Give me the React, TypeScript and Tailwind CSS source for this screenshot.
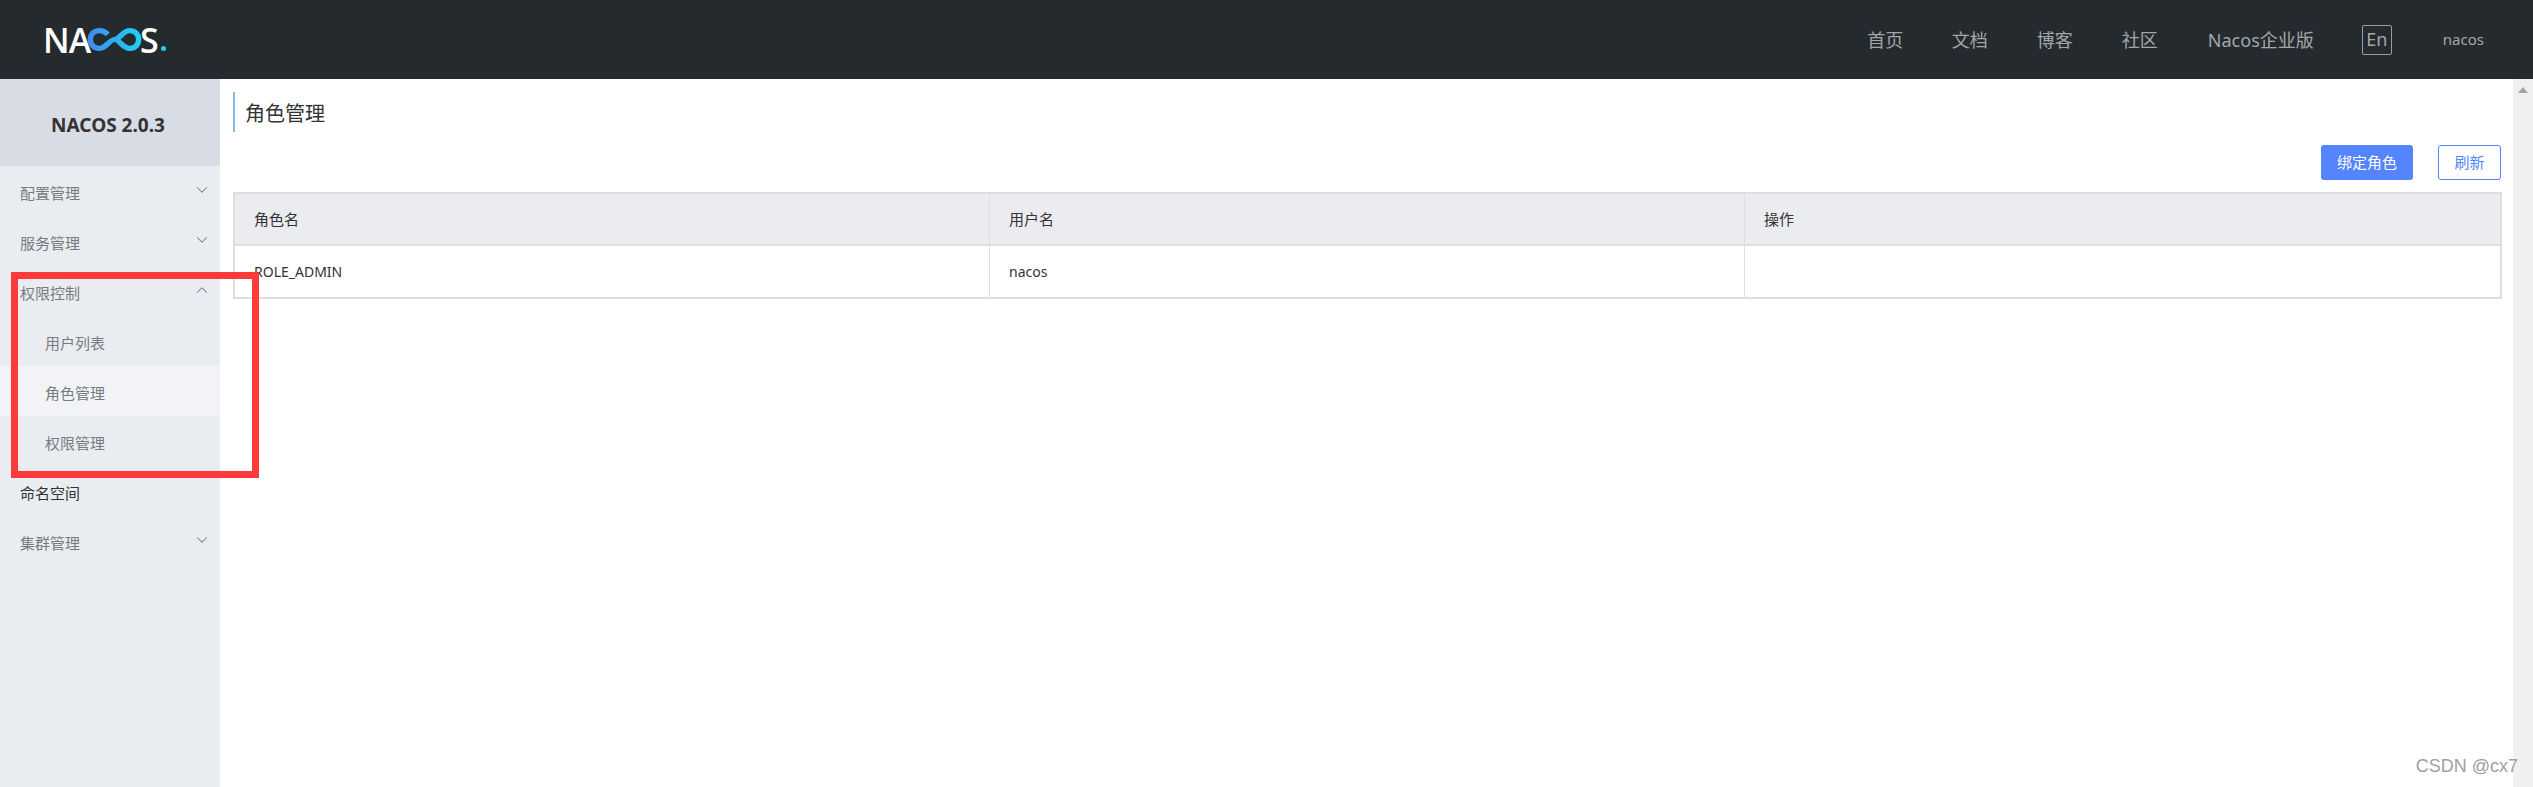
import { ChevronDown, ChevronUp } from 'lucide-react'

const navLinks = [
  { label: '首页', width: 'w-[84.5px]' },
  { label: '文档', width: 'w-[85px]' },
  { label: '博客', width: 'w-[85px]' },
  { label: '社区', width: 'w-[86px]' },
  { label: 'Nacos企业版', width: 'w-[154px]' },
]

const menu = [
  { label: '配置管理', arrow: 'down' },
  { label: '服务管理', arrow: 'down' },
  { label: '权限控制', arrow: 'up' },
  { label: '用户列表', sub: true },
  { label: '角色管理', sub: true, active: true },
  { label: '权限管理', sub: true },
  { label: '命名空间', dark: true },
  { label: '集群管理', arrow: 'down' },
]

function Logo() {
  return (
    <div className="flex items-center h-[24px] text-white font-['Open_Sans',sans-serif] font-semibold text-[34px] leading-none">
      <span className="tracking-[-1px]">NA</span>
      <svg width="55" height="25" viewBox="0 0 50 24" fill="none" preserveAspectRatio="none" className="-ml-[3px]">
        <defs>
          <linearGradient id="loop" x1="0" y1="0" x2="1" y2="0">
            <stop offset="0" stopColor="#3f8cf5" />
            <stop offset="1" stopColor="#1fd0f0" />
          </linearGradient>
        </defs>
        <path
          d="M19 7 C16 4 13 3.500 11 3.500 C6 3.500 3 7.500 3 12 C3 16.500 6 20.500 11 20.500 C18 20.500 20 12 25 12 C30 12 32 3.500 39 3.500 C44 3.500 47 7.500 47 12 C47 16.500 44 20.500 39 20.500 C32 20.500 30 12 25 12"
          stroke="url(#loop)"
          strokeWidth="5"
          strokeLinecap="butt"
        />
      </svg>
      <span className="-ml-[2px]">S</span>
      <span className="w-[5px] h-[5px] bg-[#1fd0e8] rounded-full self-end mb-[1px] ml-[2px]" />
    </div>
  )
}

export default function App() {
  return (
    <div className="relative h-[787px] w-[2533px] overflow-hidden bg-white flex flex-col font-['Noto_Sans','Noto_Sans_CJK_SC',sans-serif]">
      {/* Header */}
      <header className="h-[79px] bg-[#252a2f] flex items-center shrink-0">
        <div className="ml-[43px]">
          <Logo />
        </div>
        <nav className="ml-auto flex items-center mr-[49px]">
          {navLinks.map((link) => (
            <span key={link.label} className={`${link.width} text-[18px] text-[#a3a6a9] leading-none whitespace-nowrap`}>
              {link.label}
            </span>
          ))}
          <span className="w-[30px] h-[30px] border border-[#9a9da0] rounded-[2px] flex items-center justify-center text-[18px] text-[#a3a6a9]">
            En
          </span>
          <span className="ml-[51px] text-[15px] text-[#a3a6a9]">nacos</span>
        </nav>
      </header>

      <div className="flex flex-1 min-h-0">
        {/* Sidebar */}
        <aside className="w-[220px] bg-[#e9ecf1] shrink-0">
          <div className="h-[87px] bg-[#d8dce4] flex items-center justify-center pt-[6px] pr-[4px] text-[19px] font-bold text-[#333333]">
            NACOS 2.0.3
          </div>
          <ul>
            {menu.map((item) => (
              <li
                key={item.label}
                className={`h-[50px] flex items-center justify-between pt-[4px] pr-[9px] text-[15px] ${item.sub ? 'pl-[45px]' : 'pl-[20px]'} ${item.active ? 'bg-[#f2f3f7]' : ''} ${item.dark ? 'text-[#333333]' : 'text-[#777b80]'}`}
              >
                {item.label}
                {item.arrow === 'down' && <ChevronDown size={18} strokeWidth={1.4} className="text-[#777b80] -mt-[6px]" />}
                {item.arrow === 'up' && <ChevronUp size={18} strokeWidth={1.4} className="text-[#777b80] -mt-[6px]" />}
              </li>
            ))}
          </ul>
        </aside>

        {/* Content */}
        <main className="flex-1 min-w-0 pl-[13px] pr-[11px] pt-[13px]">
          <div className="border-l-2 border-[#88b7e0] h-[40px] pl-[10px] flex items-center pt-[3px] text-[20px] text-[#333333]">
            角色管理
          </div>
          <div className="flex justify-end gap-[25px] mt-[13px] pr-[1px]">
            <button className="w-[92px] h-[35px] rounded-[3px] bg-[#5584ff] text-white text-[15px]">绑定角色</button>
            <button className="w-[63px] h-[35px] rounded-[3px] border border-[#5584ff] bg-white text-[#5584ff] text-[15px]">刷新</button>
          </div>
          <div className="mt-[12px] border-2 border-[#dcdee3] border-b-2 text-[14px] text-[#333333]">
            <div className="grid grid-cols-3 h-[52px] bg-[#ebecf0] border-b-2 border-[#dcdee3] text-[15px]">
              <div className="flex items-center pl-[19px] border-r border-[#dcdee3]">角色名</div>
              <div className="flex items-center pl-[19px] border-r border-[#dcdee3]">用户名</div>
              <div className="flex items-center pl-[19px]">操作</div>
            </div>
            <div className="grid grid-cols-3 h-[51px]">
              <div className="flex items-center pl-[19px] border-r border-[#dcdee3]">ROLE_ADMIN</div>
              <div className="flex items-center pl-[19px] border-r border-[#dcdee3]">nacos</div>
              <div />
            </div>
          </div>
        </main>

        {/* Scrollbar */}
        <div className="w-[20px] shrink-0 bg-[#f0f0f0] flex justify-center pt-[8px]">
          <svg width="10" height="6" viewBox="0 0 10 6">
            <path d="M5 0 L10 6 L0 6 Z" fill="#a3a3a3" />
          </svg>
        </div>
      </div>

      {/* Annotation drawn over the sidebar */}
      <div className="absolute left-[11px] top-[272px] w-[248px] h-[206px] border-[7px] border-[#ff3a3a]" />
      <div className="absolute right-[15px] bottom-[7px] text-[18px] text-[#a0a0a0] font-['Liberation_Sans',sans-serif]">CSDN @cx7</div>
    </div>
  )
}
